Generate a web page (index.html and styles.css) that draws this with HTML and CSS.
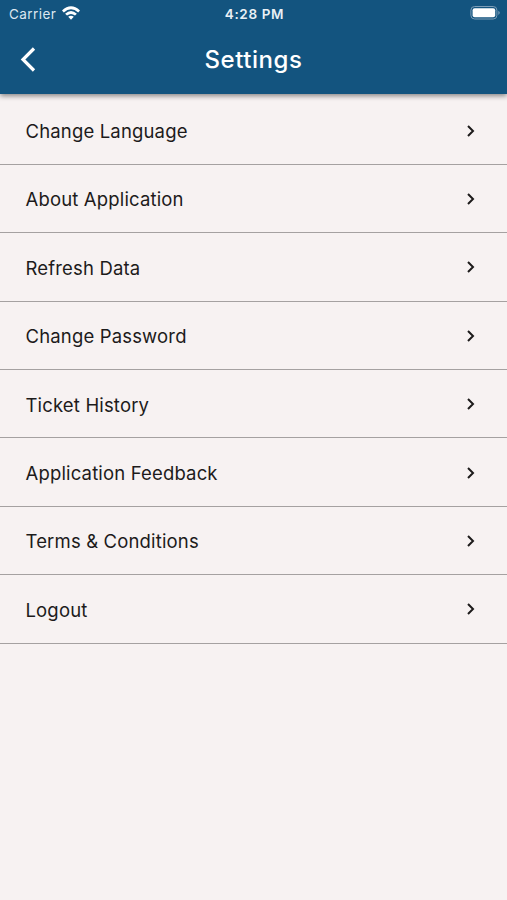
FILE: index.html
```html
<!DOCTYPE html>
<html lang="en">
<head>
<meta charset="utf-8">
<title>Settings</title>
<link rel="stylesheet" href="styles.css">
</head>
<body>
<header class="header">
  <div class="status">
    <div class="carrier"><span>Carrier</span>
      <svg class="wifi" viewBox="0 0 18 14"><path d="M0 4.5Q9-3.9 18 4.5L16.2 6.4Q9 0 1.8 6.4ZM3.1 7.7Q9 2.5 14.9 7.7L13 9.6Q9 6.2 5 9.6ZM6.2 10.8Q9 8.6 11.8 10.8L9 13.7Z" fill="#fff"/></svg>
    </div>
    <span class="time">4:28 PM</span>
    <svg class="battery" viewBox="0 0 30 14"><rect x=".9" y=".5" width="26" height="12.5" rx="3.7" fill="none" stroke="#7c9db7"/><rect x="2.6" y="2.2" width="22.6" height="9.1" rx="2" fill="#fff"/><path d="M28.3 4.7q3 2 0 4.2z" fill="#7c9db7"/></svg>
  </div>
  <div class="bar">
    <svg class="back" viewBox="0 0 16 26"><path d="M14 2.5 3 13.5l11 11" fill="none" stroke="#fff" stroke-width="3.2"/></svg>
    <h1 class="title">Settings</h1>
  </div>
</header>
<main class="list">
  <div class="row"><span>Change Language</span><svg class="chev" viewBox="0 0 8 12"><path d="m1 1 5 5-5 5"/></svg></div>
  <div class="row"><span>About Application</span><svg class="chev" viewBox="0 0 8 12"><path d="m1 1 5 5-5 5"/></svg></div>
  <div class="row"><span>Refresh Data</span><svg class="chev" viewBox="0 0 8 12"><path d="m1 1 5 5-5 5"/></svg></div>
  <div class="row"><span>Change Password</span><svg class="chev" viewBox="0 0 8 12"><path d="m1 1 5 5-5 5"/></svg></div>
  <div class="row"><span>Ticket History</span><svg class="chev" viewBox="0 0 8 12"><path d="m1 1 5 5-5 5"/></svg></div>
  <div class="row"><span>Application Feedback</span><svg class="chev" viewBox="0 0 8 12"><path d="m1 1 5 5-5 5"/></svg></div>
  <div class="row"><span>Terms &amp; Conditions</span><svg class="chev" viewBox="0 0 8 12"><path d="m1 1 5 5-5 5"/></svg></div>
  <div class="row"><span>Logout</span><svg class="chev" viewBox="0 0 8 12"><path d="m1 1 5 5-5 5"/></svg></div>
</main>
</body>
</html>
```
FILE: styles.css
```css
* { box-sizing: border-box; }
body { margin: 0; min-height: 900px; background: #f7f2f2; font-family: Inter, sans-serif; color: #1d1b1b; }
.header { height: 94px; background: #13547f; color: #fff; box-shadow: 0 2px 5px rgba(0,0,0,.45); }
.status { display: grid; grid-template-columns: 1fr auto 1fr; align-items: center; height: 26px; padding: 0 7px 0 9px; font-size: 13.5px; }
.carrier { display: flex; align-items: center; gap: 5.5px; letter-spacing: .45px; color: #dce7ef; }
.carrier span, .time { padding-top: 2px; }
.wifi { width: 18px; height: 14px; }
.time { font-weight: 600; font-size: 13.5px; letter-spacing: .65px; color: #e9f0f5; }
.battery { width: 30px; height: 14px; justify-self: end; }
.bar { display: grid; grid-template-columns: 40px 1fr 40px; align-items: center; height: 66px; padding: 0 20px; }
.back { width: 16px; height: 26px; }
.title { margin: 0; text-align: center; font-size: 24px; font-weight: 500; letter-spacing: .55px; }
.list { padding-top: 2.5px; }
.row { display: flex; align-items: center; justify-content: space-between; height: 68.4px; padding: 1px 32px 0 25.5px; border-bottom: 1px solid #a5a1a1; font-size: 18.5px; letter-spacing: .16px; }
.row span { padding-top: .7px; }
.chev { width: 8px; height: 12px; fill: none; stroke: #1d1b1b; stroke-width: 2; }
```
